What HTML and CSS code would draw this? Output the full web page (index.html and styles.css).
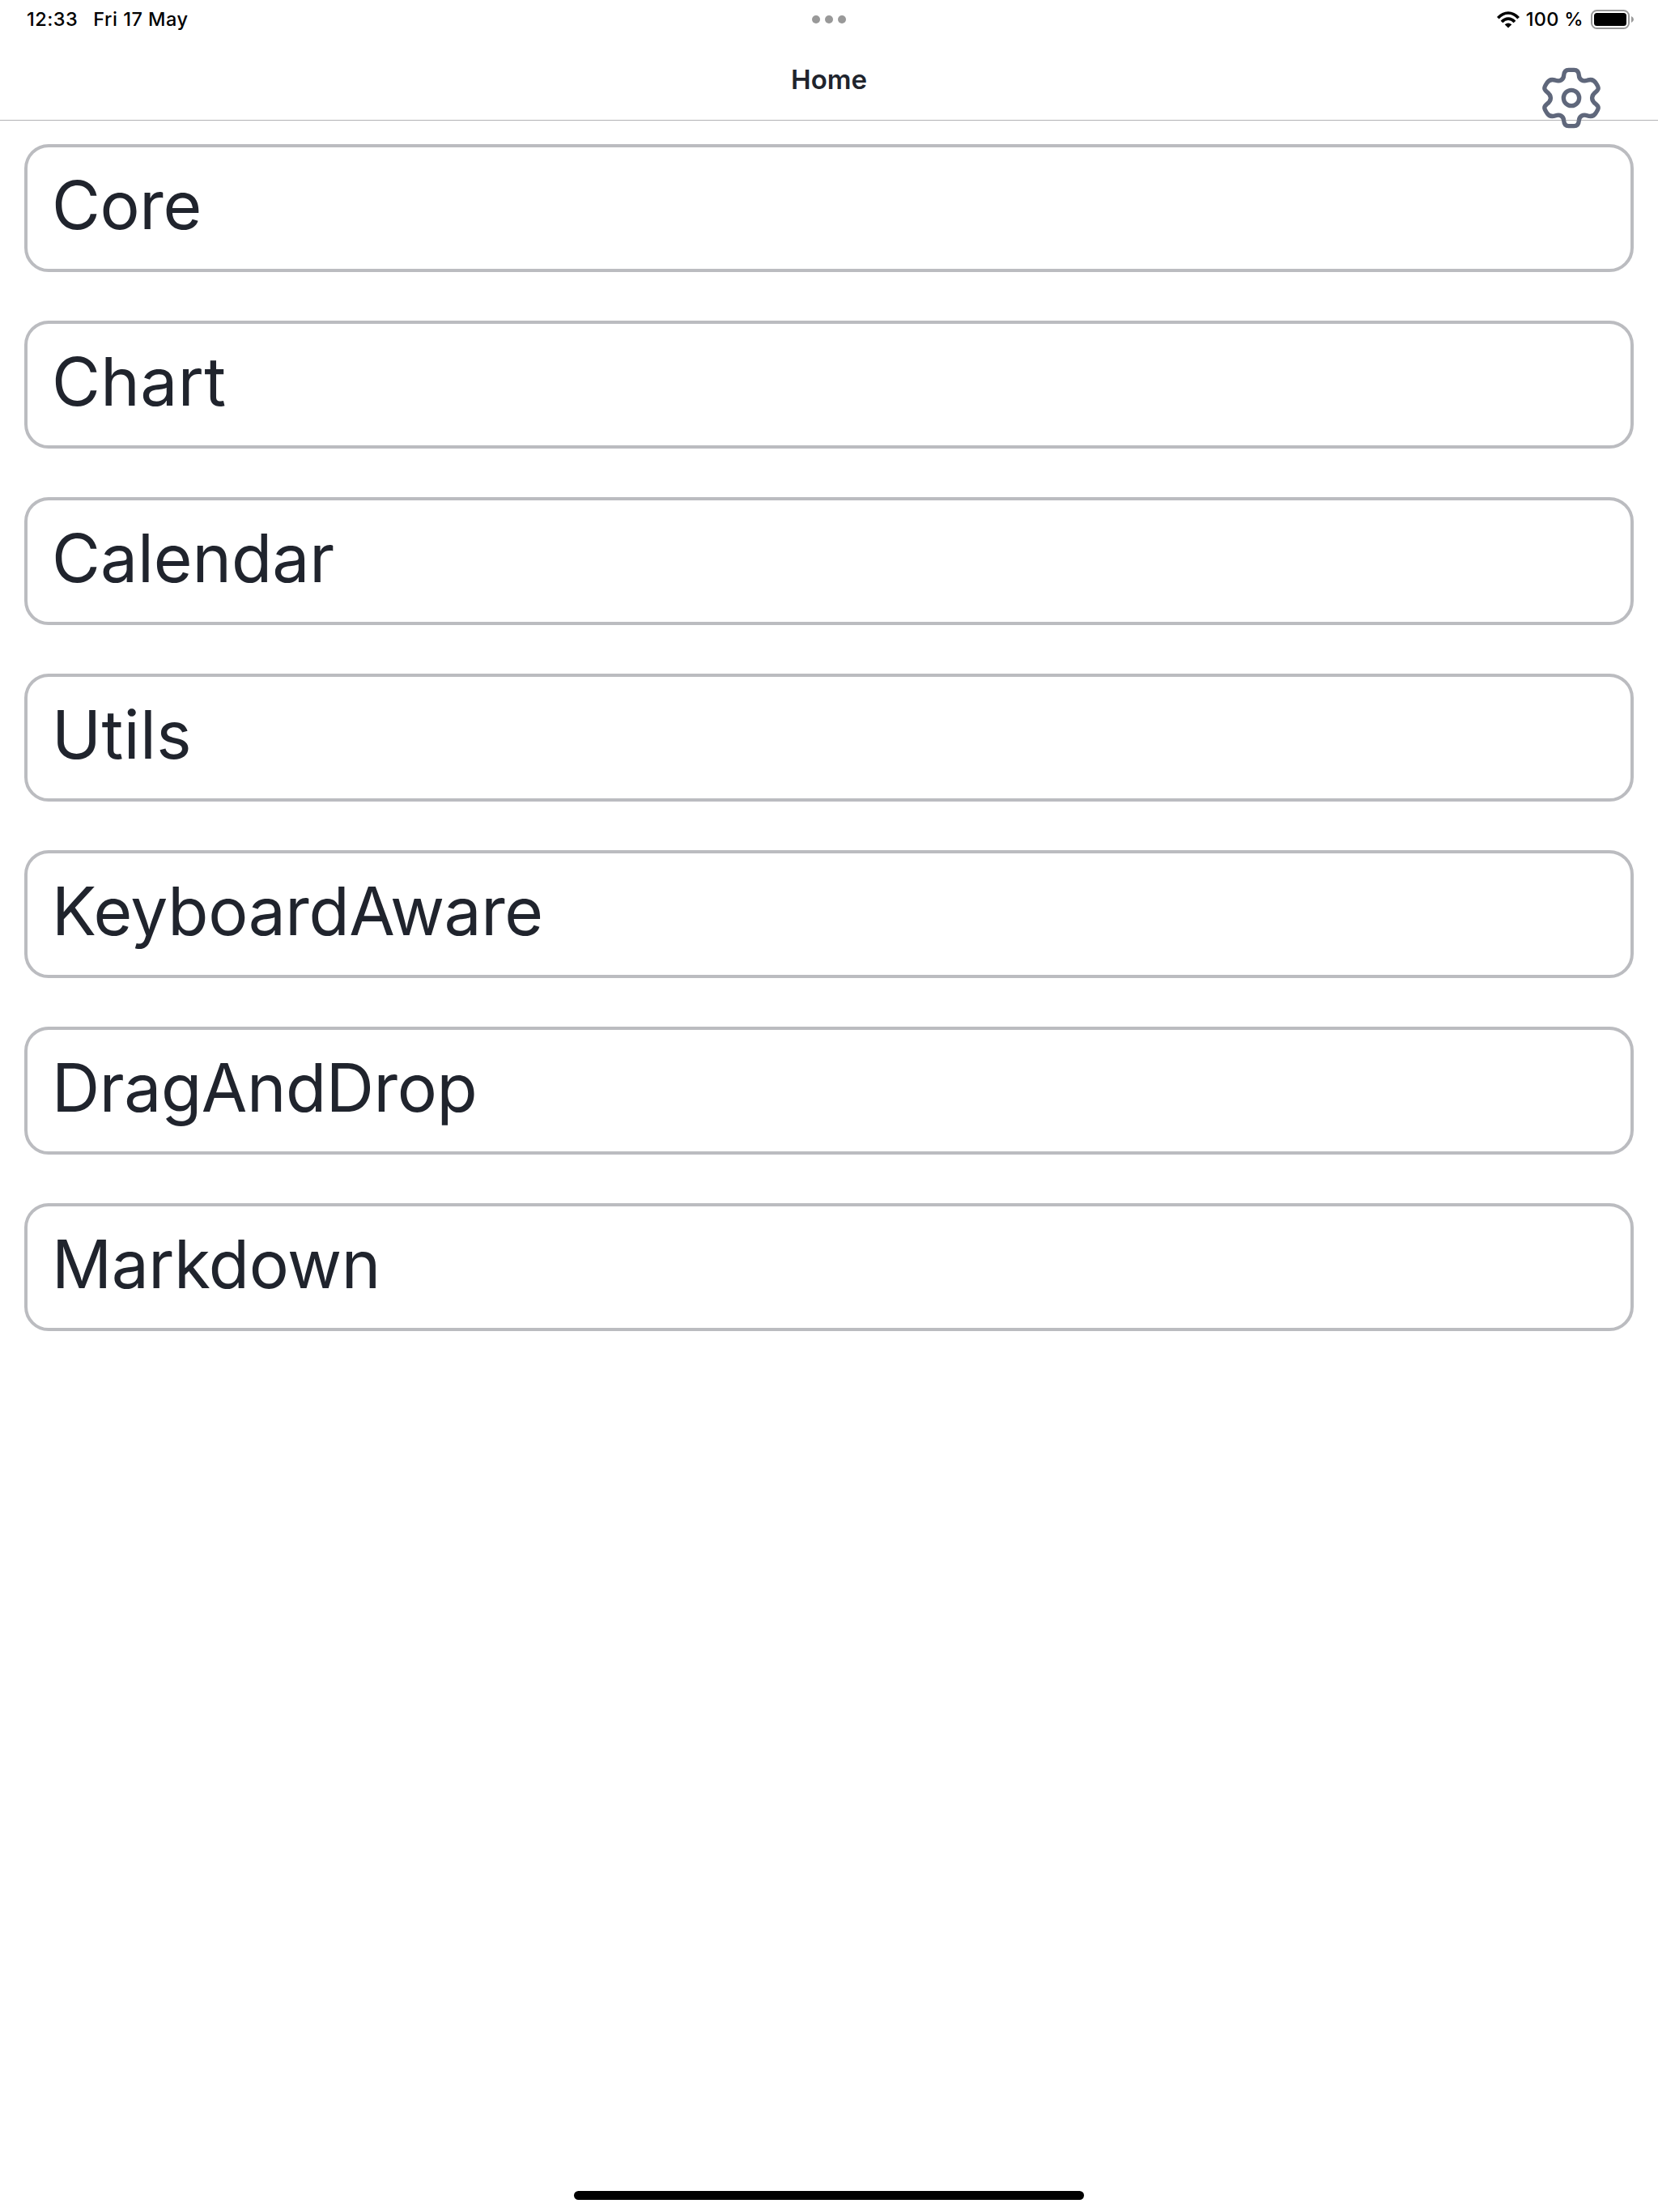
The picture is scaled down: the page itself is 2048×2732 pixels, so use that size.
FILE: index.html
```html
<!DOCTYPE html>
<html lang="en">
<head>
<meta charset="utf-8">
<title>Home</title>
<link rel="stylesheet" href="styles.css">
</head>
<body>
<div class="status">
  <div class="status-left"><span class="time">12:33</span><span class="date">Fri 17 May</span></div>
  <div class="dots"><i></i><i></i><i></i></div>
  <div class="status-right">
    <svg class="wifi" viewBox="0 0 28 21"><g fill="none" stroke="#000" stroke-width="3.7"><path d="M1.3 8.2Q7 2 14 2T26.700 8.200"/><path d="M6 13Q9.500 9.100 14 9.100T22 13"/></g><path d="M9.700 16.300Q14 12.600 18.300 16.300L14 20.500Z"/></svg>
    <span class="percent">100 %</span>
    <svg class="battery" viewBox="0 0 54 24"><rect x="1" y="1" width="46" height="22" rx="6.500" fill="none" stroke="#999" stroke-width="2"/><rect x="4" y="4" width="40" height="16" rx="3.500"/><path d="M50 8Q53 9.500 53 12T50 16Z" fill="#999"/></svg>
  </div>
</div>
<header class="header">
  <h1>Home</h1>
  <svg class="gear" viewBox="-108 -114 216 228" fill="none" stroke="#5f677b" stroke-width="16"><path d="M-10-104H10C22-104 27-96 28-84C29-67 43-60 58-65C74-71 84-67 91-55C102-38 103-33 91-23C72-9 72 9 91 23C103 33 102 38 91 55C84 67 74 71 58 65C43 60 29 67 28 84C27 96 22 104 10 104H-10C-22 104-27 96-28 84C-29 67-43 60-58 65C-74 71-84 67-91 55C-102 38-103 33-91 23C-72 9-72-9-91-23C-103-33-102-38-91-55C-84-67-74-71-58-65C-43-60-29-67-28-84C-27-96-22-104-10-104Z"/><circle r="29"/></svg>
</header>
<main class="list">
  <div class="card">Core</div>
  <div class="card loose">Chart</div>
  <div class="card even">Calendar</div>
  <div class="card loose">Utils</div>
  <div class="card">KeyboardAware</div>
  <div class="card">DragAndDrop</div>
  <div class="card">Markdown</div>
</main>
<div class="home-indicator"></div>
</body>
</html>
```
FILE: styles.css
```css
* { box-sizing: border-box; }
body {
  margin: 0;
  height: 2732px;
  display: flex;
  flex-direction: column;
  background: #fff;
  color: #20242d;
  font-family: Inter, sans-serif;
}
.status {
  height: 48px;
  display: grid;
  grid-template-columns: 1fr 42px 1fr;
  align-items: center;
  padding: 0 31px;
  color: #000;
  font-size: 23.5px;
  font-weight: 480;
  line-height: 48px;
}
.status-left { display: flex; gap: 19px; padding-left: 2px; letter-spacing: 0.5px; }
.dots { display: flex; gap: 6px; }
.dots i { width: 10px; height: 10px; border-radius: 50%; background: #999; }
.status-right { display: flex; align-items: center; justify-content: flex-end; }
.wifi { width: 28px; height: 21px; margin-right: 8px; }
.percent { margin-right: 9px; letter-spacing: 0.3px; }
.battery { width: 54px; height: 24px; margin-right: -2px; }
.header {
  position: relative;
  height: 101px;
  border-bottom: 1px solid #b2b2b4;
}
h1 {
  margin: 0;
  text-align: center;
  font-size: 33px;
  font-weight: 560;
  line-height: 100px;
}
/* The settings icon hangs over the header's bottom edge. */
.gear { position: absolute; right: 71px; top: 35px; width: 72px; height: 76px; }
.list {
  flex: 1;
  display: flex;
  flex-direction: column;
  gap: 60px;
  padding: 29px 30px;
}
.card {
  height: 158px;
  padding: 0 30px;
  border: 4px solid #bbbcc0;
  border-radius: 30px;
  font-size: 82px;
  font-weight: 380;
  letter-spacing: -0.4px;
  line-height: 144px;
}
.card.loose { letter-spacing: 0.4px; }
.card.even { letter-spacing: 0; }
.home-indicator {
  align-self: center;
  width: 630px;
  height: 11px;
  margin-bottom: 15px;
  border-radius: 6px;
  background: #000;
}
```
